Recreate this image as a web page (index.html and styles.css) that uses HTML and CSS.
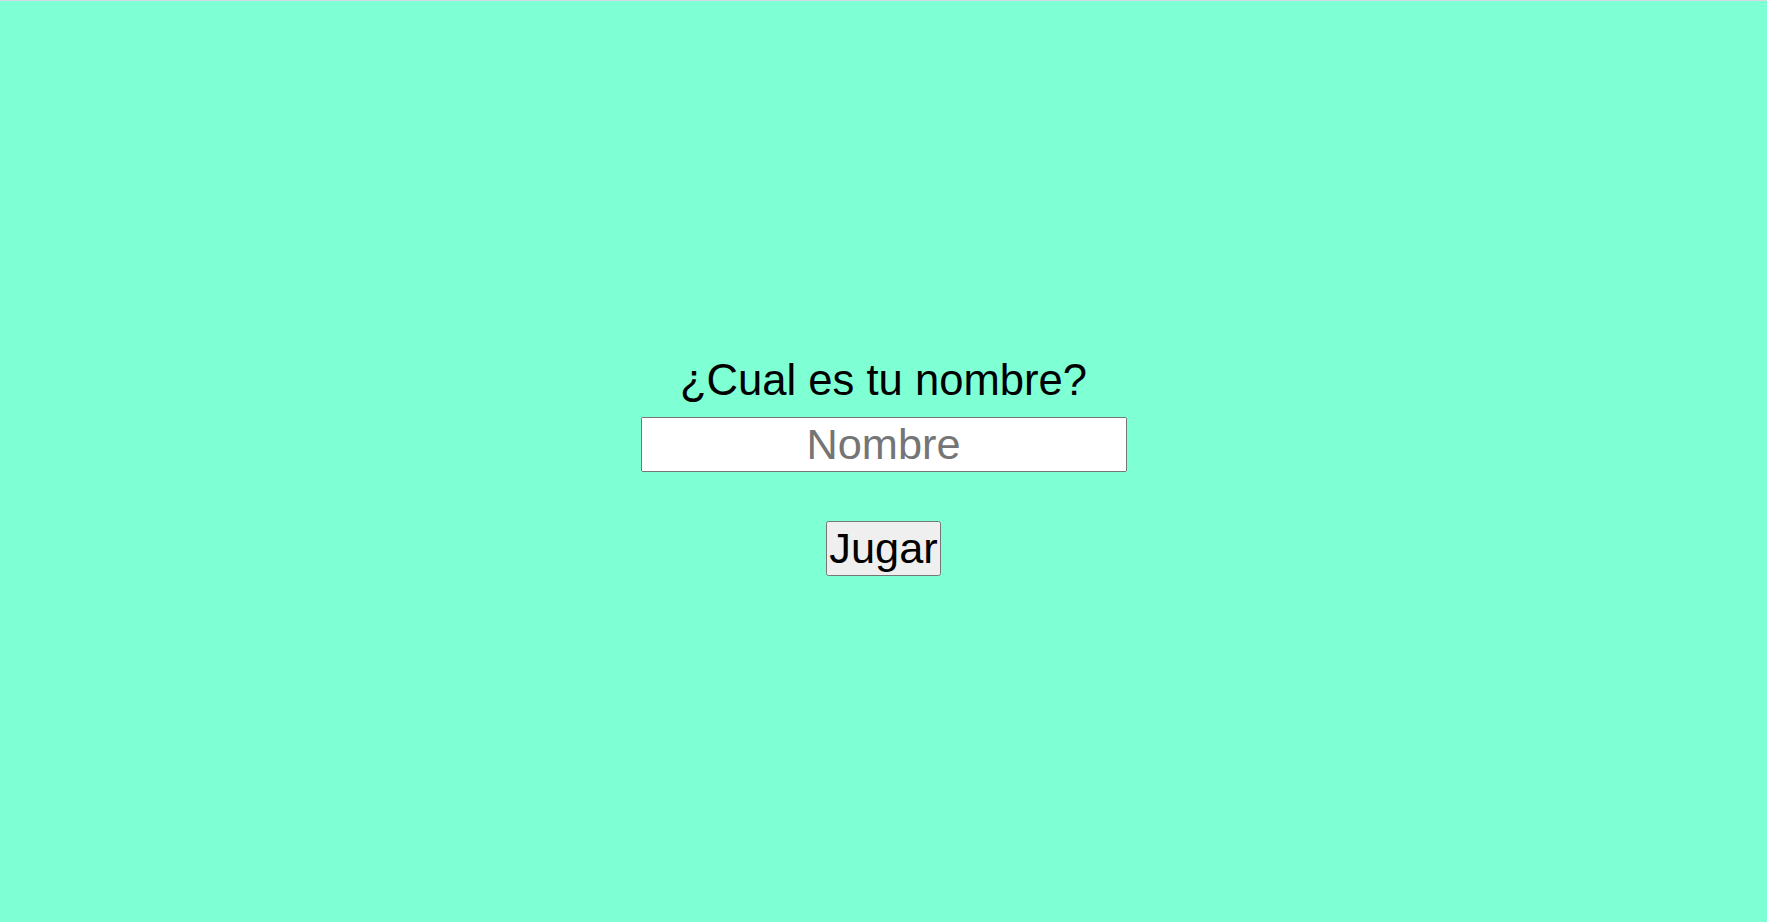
FILE: index.html
```html
<!DOCTYPE html>
<html lang="es">
<head>
<meta charset="utf-8">
<title>Juego</title>
<link rel="stylesheet" href="styles.css">
</head>
<body>
<main class="screen">
  <p class="title">¿Cual es tu nombre?</p>
  <input class="name-input" type="text" placeholder="Nombre">
  <button class="play-btn" type="button">Jugar</button>
</main>
</body>
</html>
```

FILE: styles.css
```css
html, body {
  margin: 0;
  padding: 0;
}
body {
  background: #7fffd4;
  font-family: "Liberation Sans", Arial, sans-serif;
  border-top: 1px solid #d9d9e3;
}
.screen {
  box-sizing: border-box;
  height: calc(100vh - 1px);
  padding-top: 8px;
  display: flex;
  flex-direction: column;
  align-items: center;
  justify-content: center;
}
.title {
  margin: 0 0 12px;
  font-size: 43.6px;
  color: #000;
}
.name-input {
  box-sizing: border-box;
  width: 486px;
  font-family: "Liberation Sans", Arial, sans-serif;
  font-size: 43.3px;
  text-align: center;
  margin: 0;
}
.name-input::placeholder {
  color: #757575;
}
.play-btn {
  margin-top: 49px;
  font-family: "Liberation Sans", Arial, sans-serif;
  font-size: 43.3px;
  padding: 1px 1px;
  color: #000;
}
```
